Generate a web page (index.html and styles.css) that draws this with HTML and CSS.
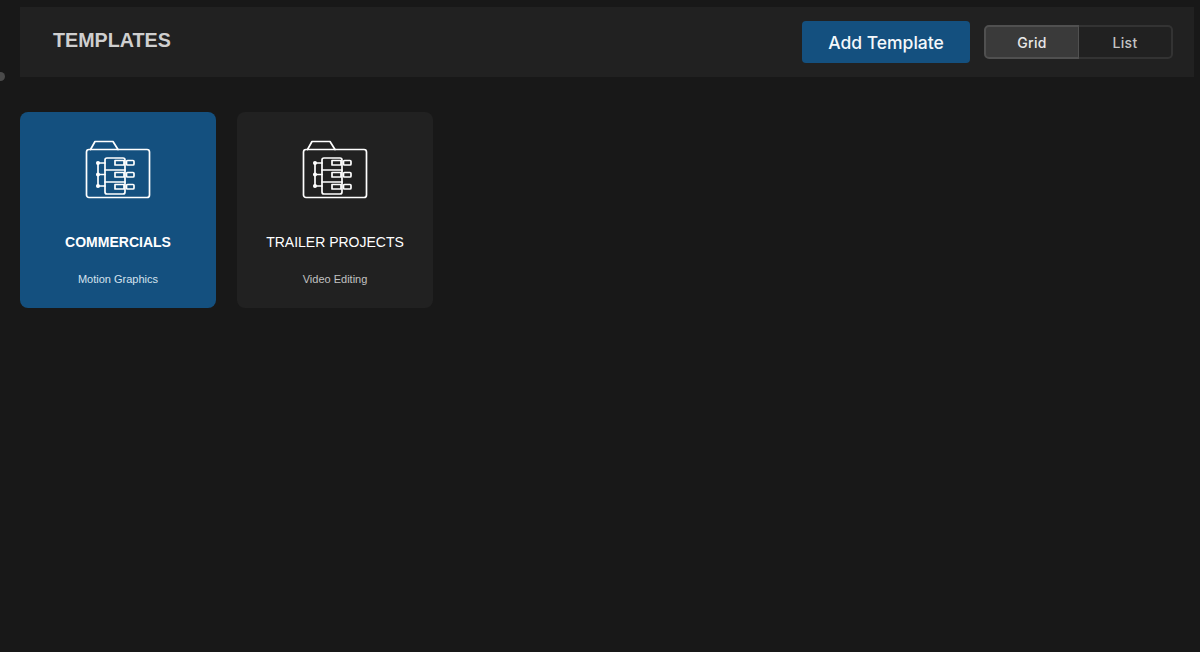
FILE: index.html
```html
<!DOCTYPE html>
<html lang="en">
<head>
    <meta charset="UTF-8">
    <title>Templates</title>
    <link rel="stylesheet" href="styles.css">
</head>
<body>
    <span class="edge-dot"></span>
    <div class="topbar">
        <h1 class="title">TEMPLATES</h1>
        <button class="add-btn">Add Template</button>
        <div class="view-switch">
            <div class="view-opt active">Grid</div>
            <div class="view-opt">List</div>
        </div>
    </div>

    <div class="cards">
        <div class="card selected">
            <svg class="card-icon" viewBox="0 0 66 60" fill="none" stroke="#fff" stroke-width="1.7" stroke-linejoin="round" stroke-linecap="round">
                <rect x="1.500" y="9.500" width="63" height="48" rx="2.500"/>
                <path d="M5.500 9.500L10 1.500H28L33 9.500"/>
                <rect x="20" y="18" width="20" height="36" rx="2"/>
                <path d="M20 30H40M20 42H40"/>
                <rect x="30" y="20.500" width="9" height="4.500"/>
                <rect x="30" y="32.500" width="9" height="4.500"/>
                <rect x="30" y="44.500" width="9" height="4.500"/>
                <rect x="41.500" y="20.500" width="7.500" height="4.500" rx="1"/>
                <rect x="41.500" y="32.500" width="7.500" height="4.500" rx="1"/>
                <rect x="41.500" y="44.500" width="7.500" height="4.500" rx="1"/>
                <path d="M13 23V46M13 23H20M13 34.500H20M13 46H20"/>
                <circle cx="13" cy="23" r="1.200" fill="#fff"/>
                <circle cx="13" cy="34.500" r="1.200" fill="#fff"/>
                <circle cx="13" cy="46" r="1.200" fill="#fff"/>
            </svg>
            <div class="card-name bold">COMMERCIALS</div>
            <div class="card-sub">Motion Graphics</div>
        </div>
        <div class="card">
            <svg class="card-icon" viewBox="0 0 66 60" fill="none" stroke="#fff" stroke-width="1.7" stroke-linejoin="round" stroke-linecap="round">
                <rect x="1.500" y="9.500" width="63" height="48" rx="2.500"/>
                <path d="M5.500 9.500L10 1.500H28L33 9.500"/>
                <rect x="20" y="18" width="20" height="36" rx="2"/>
                <path d="M20 30H40M20 42H40"/>
                <rect x="30" y="20.500" width="9" height="4.500"/>
                <rect x="30" y="32.500" width="9" height="4.500"/>
                <rect x="30" y="44.500" width="9" height="4.500"/>
                <rect x="41.500" y="20.500" width="7.500" height="4.500" rx="1"/>
                <rect x="41.500" y="32.500" width="7.500" height="4.500" rx="1"/>
                <rect x="41.500" y="44.500" width="7.500" height="4.500" rx="1"/>
                <path d="M13 23V46M13 23H20M13 34.500H20M13 46H20"/>
                <circle cx="13" cy="23" r="1.200" fill="#fff"/>
                <circle cx="13" cy="34.500" r="1.200" fill="#fff"/>
                <circle cx="13" cy="46" r="1.200" fill="#fff"/>
            </svg>
            <div class="card-name">TRAILER PROJECTS</div>
            <div class="card-sub">Video Editing</div>
        </div>
    </div>
</body>
</html>
```

FILE: styles.css
```css
html, body {
    height: 100%;
}
body {
    margin: 0;
    padding: 7px 6px 0 20px;
    box-sizing: border-box;
    background-color: #181818;
    font-family: "Liberation Sans", Arial, sans-serif;
    overflow: hidden;
}
.edge-dot {
    position: absolute;
    left: -4px;
    top: 72px;
    width: 9px;
    height: 9px;
    border-radius: 50%;
    background-color: #4a4a4a;
}
.topbar {
    display: flex;
    align-items: center;
    height: 70px;
    padding: 0 21px 0 33px;
    background-color: #212121;
}
.title {
    margin: 0 auto 3px 0;
    font-size: 19.7px;
    font-weight: 700;
    color: #cfcfcf;
}
.add-btn {
    width: 168px;
    height: 42px;
    margin-right: 14px;
    border: none;
    border-radius: 4px;
    background-color: #14507f;
    color: #f4f8fb;
    font-family: Inter, sans-serif;
    font-size: 17.5px;
    font-weight: 500;
}
.view-switch {
    display: flex;
    width: 189px;
    height: 34px;
}
.view-opt {
    flex: 1;
    display: flex;
    align-items: center;
    justify-content: center;
    box-sizing: border-box;
    border: 2px solid #333;
    border-left: none;
    border-radius: 0 5px 5px 0;
    font-family: Inter, sans-serif;
    font-size: 14px;
    font-weight: 500;
    letter-spacing: 0.3px;
    color: #c4c4c4;
}
.view-opt.active {
    border: 2px solid #505050;
    border-right-width: 1px;
    border-radius: 5px 0 0 5px;
    background-color: #3a3a3a;
    color: #e8e8e8;
}
.cards {
    display: flex;
    gap: 21px;
    margin-top: 35px;
}
.card {
    display: flex;
    flex-direction: column;
    align-items: center;
    width: 196px;
    height: 196px;
    box-sizing: border-box;
    padding-top: 28px;
    border-radius: 8px;
    background-color: #212121;
}
.card.selected {
    background-color: #14507f;
}
.card-icon {
    width: 66px;
    height: 60px;
}
.card-name {
    margin-top: 34px;
    font-size: 14px;
    line-height: 16px;
    color: #fff;
}
.card-name.bold {
    font-weight: 700;
}
.card-sub {
    margin-top: 23px;
    font-size: 11px;
    line-height: 13px;
    color: #c2c2c2;
}
.selected .card-sub {
    color: #d5e2ee;
}
```
